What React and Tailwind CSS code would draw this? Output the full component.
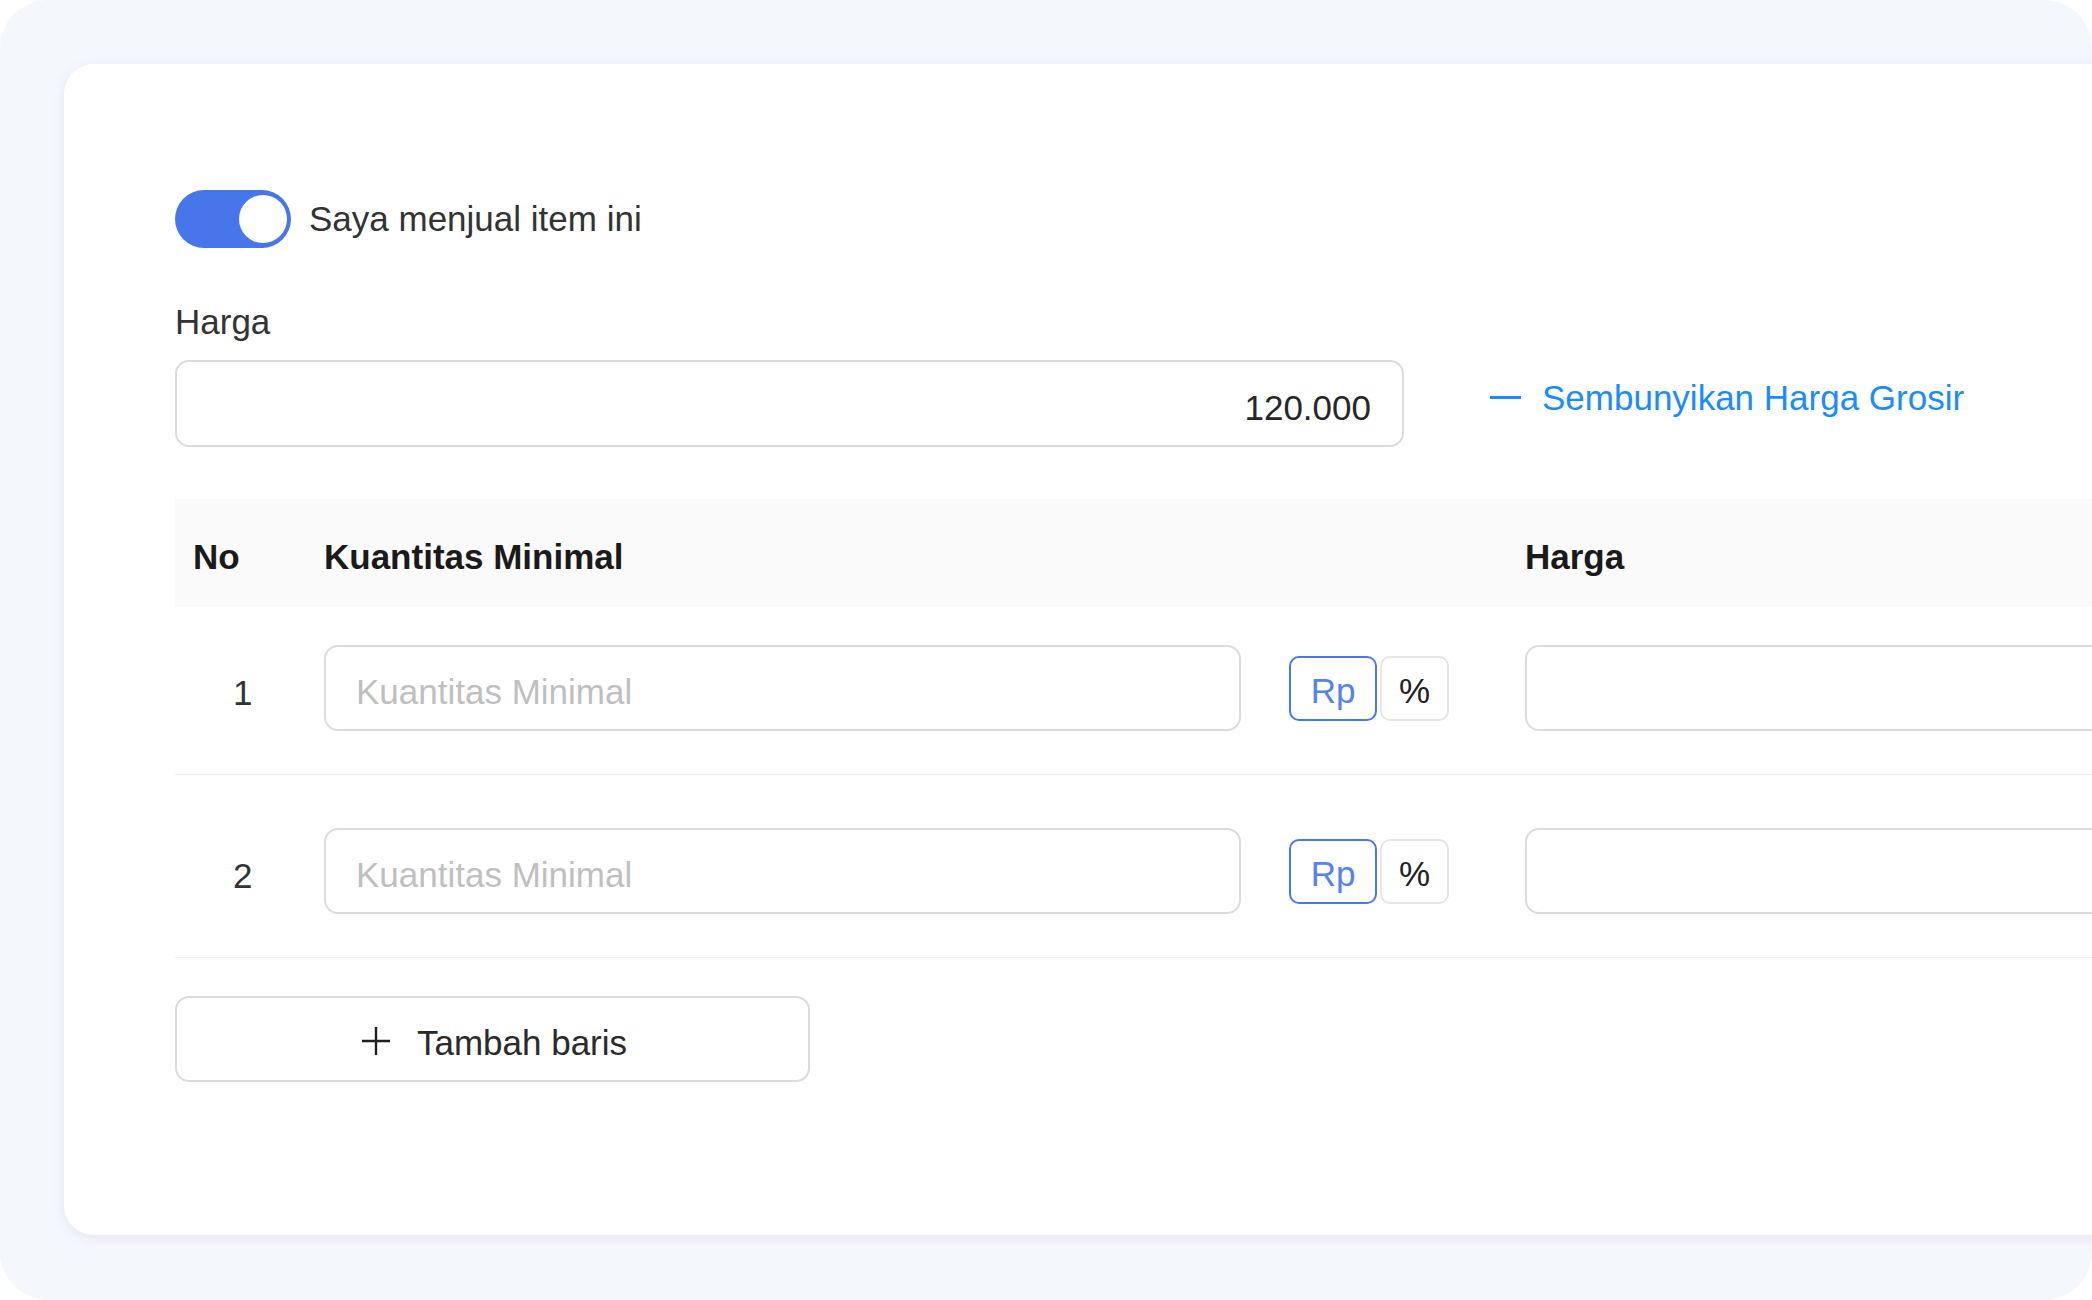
import React from "react";

const font = { fontFamily: '"Liberation Sans", Arial, sans-serif' };

function Row({ no, pt }) {
  return (
    <div className={`flex items-center border-b border-[#f0f0f0] ${pt} pb-[43px]`}>
      <div className="w-[131px] shrink-0 pl-[58px] pt-[10px] text-[35px] text-[#333]">{no}</div>
      <div className="w-[1201px] shrink-0 flex items-center pl-[18px]">
        <input
          placeholder="Kuantitas Minimal"
          className="w-[917px] h-[86px] rounded-[14px] border-2 border-[#dcdcdc] px-[30px] pt-[8px] text-[35px] text-[#333] placeholder:text-[#bfbfbf] outline-none"
          style={font}
        />
        <div className="ml-[48px] flex items-center gap-[3px]">
          <div className="w-[88px] h-[65px] rounded-[10px] border-2 border-[#4a78ec] flex items-center justify-center pt-[6px] text-[35px] text-[#5682ee]">
            Rp
          </div>
          <div className="w-[69px] h-[65px] rounded-[10px] border-2 border-[#e6e6e6] flex items-center justify-center pt-[6px] text-[35px] text-[#222]">
            %
          </div>
        </div>
      </div>
      <div className="pl-[18px]">
        <input
          className="w-[700px] h-[86px] rounded-[14px] border-2 border-[#dcdcdc] px-[30px] text-[35px] outline-none"
          style={font}
        />
      </div>
    </div>
  );
}

export default function App() {
  return (
    <div className="w-[2092px] h-[1300px] bg-white" style={font}>
      <div className="w-full h-full rounded-[48px] bg-[#f4f7fc] overflow-hidden pl-[64px] pt-[64px]">
        <div className="w-[2300px] h-[1171px] bg-white rounded-[30px] shadow-[0_3px_14px_rgba(30,50,90,0.07)] pl-[111px] pt-[126px]">
          {/* toggle */}
          <div className="flex items-center h-[58px]">
            <div className="relative w-[116px] h-[58px] rounded-full bg-[#4775ea]">
              <div className="absolute right-[4px] top-[5px] w-[48px] h-[48px] rounded-full bg-white" />
            </div>
            <span className="ml-[18px] text-[35px] leading-[40px] text-[#333]">Saya menjual item ini</span>
          </div>

          {/* Harga label */}
          <div className="mt-[54px] text-[35px] leading-[40px] text-[#333]">Harga</div>

          {/* Harga input + link */}
          <div className="mt-[18px] flex items-center">
            <div className="w-[1229px] h-[87px] rounded-[14px] border-2 border-[#dcdcdc] flex items-center justify-end pr-[31px] pt-[9px] text-[35px] text-[#262626]">
              120.000
            </div>
            <div className="ml-[86px] flex items-center -mt-[12px] text-[#1a8cff]">
              <div className="w-[31px] h-[3px] bg-[#1a8cff]" />
              <span className="ml-[21px] text-[35px] leading-[40px]">Sembunyikan Harga Grosir</span>
            </div>
          </div>

          {/* table */}
          <div className="mt-[52px]">
            <div className="flex items-center h-[108px] pt-[8px] bg-[#fafafa] text-[35px] font-bold text-[#1a1a1a]">
              <div className="w-[131px] shrink-0 pl-[18px]">No</div>
              <div className="w-[1201px] shrink-0 pl-[18px]">Kuantitas Minimal</div>
              <div className="pl-[18px]">Harga</div>
            </div>
            <Row no="1" pt="pt-[38px]" />
            <Row no="2" pt="pt-[53px]" />
          </div>

          {/* add row */}
          <div className="mt-[38px] w-[635px] h-[86px] rounded-[14px] border-2 border-[#dcdcdc] flex items-center justify-center text-[35px] text-[#2a2a2a]">
            <svg width="30" height="30" viewBox="0 0 30 30" className="mr-[26px] mt-[4px] ml-[3px]">
              <path d="M15 1v28M1 15h28" stroke="#1f1f1f" strokeWidth="2.4" />
            </svg>
            <span className="pt-[8px]">Tambah baris</span>
          </div>
        </div>
      </div>
    </div>
  );
}
